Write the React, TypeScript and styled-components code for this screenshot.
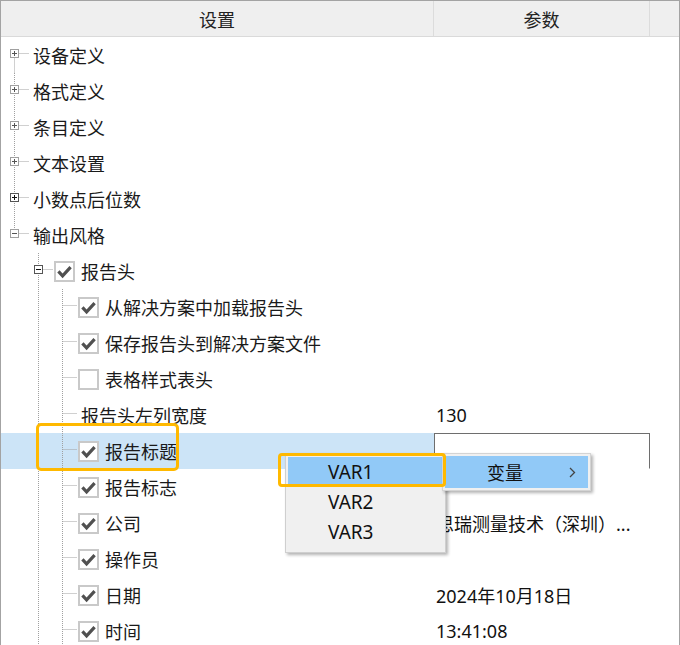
import React from 'react';
import styled, { createGlobalStyle } from 'styled-components';

const GlobalStyle = createGlobalStyle`
  html, body { margin: 0; padding: 0; background: #fff; }
  body { font-family: "Noto Sans", "Noto Sans CJK SC", sans-serif; }
`;

const Frame = styled.div`
  position: relative;
  width: 680px;
  height: 645px;
  box-sizing: border-box;
  border: 1px solid #a3a3a3;
  border-bottom: none;
  overflow: hidden;
  background: #fff;
  font-family: "Noto Sans", "Noto Sans CJK SC", sans-serif;
  font-size: 18px;
  color: #1a1a1a;
`;

const HeaderRow = styled.div`
  display: grid;
  grid-template-columns: 433px 216px 1fr;
  height: 36px;
  box-sizing: border-box;
  background: #efefef;
  border-bottom: 1px solid #dadada;
`;

const HeaderCell = styled.div<{ $divider?: boolean }>`
  display: flex;
  align-items: center;
  justify-content: center;
  border-right: ${(p) => (p.$divider ? '1px solid #dcdcdc' : 'none')};
  color: #222;
  font-size: 18px;
`;

const Row = styled.div`
  display: grid;
  grid-template-columns: 433px 216px 1fr;
  height: 36px;
`;

const TreeCell = styled.div<{ $selected?: boolean }>`
  display: flex;
  align-items: center;
  height: 36px;
  background: ${(p) => (p.$selected ? '#cce4f7' : 'transparent')};
  white-space: nowrap;
  overflow: hidden;
`;

const ValueCell = styled.div`
  display: flex;
  align-items: center;
  height: 36px;
  white-space: nowrap;
  overflow: hidden;
`;

const ValueText = styled.span`
  padding-left: 2px;
  color: #111;
`;

const InputBox = styled.div`
  box-sizing: border-box;
  width: 216px;
  height: 36px;
  border: 1px solid #6e6e6e;
  border-bottom-color: transparent;
  background: #fff;
`;

const GuideSvg = styled.svg`
  flex: none;
  display: block;
`;

const CheckBox = styled.span`
  flex: none;
  box-sizing: border-box;
  width: 21px;
  height: 21px;
  margin-left: 1px;
  margin-right: 6px;
  border: 2px solid #c9c9c9;
  background: #fff;
  display: flex;
  align-items: center;
  justify-content: center;
`;

const Label = styled.span<{ $plain?: boolean }>`
  margin-left: ${(p) => (p.$plain ? '4px' : '0')};
  color: #1a1a1a;
`;

const ContextMenu = styled.div`
  position: absolute;
  left: 284px;
  top: 452px;
  width: 161px;
  height: 100px;
  box-sizing: border-box;
  border: 1px solid #cfcfcf;
  background: #f0f0f0;
  padding: 3px 1px 5px 2px;
  box-shadow: 2px 2px 3px rgba(0, 0, 0, 0.3);
`;

const MenuItem = styled.div<{ $active?: boolean }>`
  height: 30px;
  display: flex;
  align-items: center;
  padding-left: 40px;
  background: ${(p) => (p.$active ? '#91c9f7' : 'transparent')};
  font-size: 19px;
  color: #111;
`;

const SubMenu = styled.div`
  position: absolute;
  left: 441px;
  top: 452px;
  width: 149px;
  height: 38px;
  box-sizing: border-box;
  border: 1px solid #d4d4d4;
  background: #f0f0f0;
  padding: 2px;
  box-shadow: 2px 2px 3px rgba(0, 0, 0, 0.3);
`;

const SubItem = styled.div`
  height: 32px;
  display: flex;
  align-items: center;
  justify-content: space-between;
  padding-left: 42px;
  padding-right: 12px;
  background: #91c9f7;
  font-size: 18px;
  color: #111;
`;

const Highlight = styled.div<{ $l: number; $t: number; $w: number; $h: number; $r: number }>`
  position: absolute;
  left: ${(p) => p.$l}px;
  top: ${(p) => p.$t}px;
  width: ${(p) => p.$w}px;
  height: ${(p) => p.$h}px;
  box-sizing: border-box;
  border: 3px solid #ffb900;
  border-radius: ${(p) => p.$r}px;
  pointer-events: none;
`;

type RowData = {
  depth: number;
  label: string;
  exp?: 'plus' | 'minus';
  check?: boolean;
  anc?: boolean[];
  above?: boolean;
  below?: boolean;
  dark?: boolean;
  value?: string;
  input?: boolean;
  selected?: boolean;
};

const rows: RowData[] = [
  { depth: 0, exp: 'plus', label: '设备定义', above: false, below: true },
  { depth: 0, exp: 'plus', label: '格式定义', above: true, below: true },
  { depth: 0, exp: 'plus', label: '条目定义', above: true, below: true },
  { depth: 0, exp: 'plus', label: '文本设置', above: true, below: true },
  { depth: 0, exp: 'plus', label: '小数点后位数', above: true, below: true, dark: true },
  { depth: 0, exp: 'minus', label: '输出风格', above: true, below: false },
  { depth: 1, exp: 'minus', check: true, label: '报告头', anc: [false], above: true, below: true, dark: true },
  { depth: 2, check: true, label: '从解决方案中加载报告头', anc: [false, true], above: true, below: true },
  { depth: 2, check: true, label: '保存报告头到解决方案文件', anc: [false, true], above: true, below: true },
  { depth: 2, check: false, label: '表格样式表头', anc: [false, true], above: true, below: true },
  { depth: 2, label: '报告头左列宽度', anc: [false, true], above: true, below: true, value: '130' },
  { depth: 2, check: true, label: '报告标题', anc: [false, true], above: true, below: true, input: true, selected: true },
  { depth: 2, check: true, label: '报告标志', anc: [false, true], above: true, below: true },
  { depth: 2, check: true, label: '公司', anc: [false, true], above: true, below: true, value: '思瑞测量技术（深圳）...' },
  { depth: 2, check: true, label: '操作员', anc: [false, true], above: true, below: true },
  { depth: 2, check: true, label: '日期', anc: [false, true], above: true, below: true, value: '2024年10月18日' },
  { depth: 2, check: true, label: '时间', anc: [false, true], above: true, below: true, value: '13:41:08' },
];

const DOT = '#a0a0a0';

function Guides({ r }: { r: RowData }) {
  const w = 24 * r.depth + 28;
  const cy = 16.5;
  const own = 13.5 + 24 * r.depth;
  const anc = r.anc || [];
  return (
    <GuideSvg width={w} height={36} viewBox={`0 0 ${w} 36`}>
      {anc.map((c, i) =>
        c ? (
          <line key={i} x1={13.5 + 24 * i} y1={0} x2={13.5 + 24 * i} y2={36} stroke={DOT} strokeDasharray="1 1" />
        ) : null
      )}
      {(r.above || r.below) && (
        <line x1={own} y1={r.above ? 0 : cy} x2={own} y2={r.below ? 36 : cy} stroke={DOT} strokeDasharray="1 1" />
      )}
      <line x1={own + 1} y1={cy} x2={w} y2={cy} stroke={DOT} strokeDasharray="1 1" />
      {r.exp && (
        <g>
          <rect x={own - 4} y={cy - 4} width={8} height={8} fill="#fff" stroke={r.dark ? '#555' : '#a0a0a0'} />
          <line x1={own - 2.5} y1={cy} x2={own + 2.5} y2={cy} stroke={r.dark ? '#111' : '#555'} />
          {r.exp === 'plus' && (
            <line x1={own} y1={cy - 2.5} x2={own} y2={cy + 2.5} stroke={r.dark ? '#111' : '#555'} />
          )}
        </g>
      )}
    </GuideSvg>
  );
}

function Check({ on }: { on: boolean }) {
  return (
    <CheckBox>
      {on && (
        <svg width={17} height={17} viewBox="0 0 17 17">
          <path d="M2.4 8.4 L6.6 12.8 L14.6 4.2" fill="none" stroke="#505050" strokeWidth={3.2} />
        </svg>
      )}
    </CheckBox>
  );
}

function Chevron() {
  return (
    <svg width={7} height={11} viewBox="0 0 7 11">
      <polyline points="1,1 5.5,5.5 1,10" fill="none" stroke="#444" strokeWidth={1.3} />
    </svg>
  );
}

export default function App() {
  return (
    <>
      <GlobalStyle />
      <Frame>
        <HeaderRow>
          <HeaderCell $divider>设置</HeaderCell>
          <HeaderCell $divider>参数</HeaderCell>
          <HeaderCell />
        </HeaderRow>
        {rows.map((r, i) => (
          <Row key={i}>
            <TreeCell $selected={r.selected}>
              <Guides r={r} />
              {r.check !== undefined && <Check on={r.check} />}
              <Label $plain={r.check === undefined}>{r.label}</Label>
            </TreeCell>
            <ValueCell>
              {r.input ? <InputBox /> : r.value ? <ValueText>{r.value}</ValueText> : null}
            </ValueCell>
            <div />
          </Row>
        ))}
        <ContextMenu>
          <MenuItem $active>VAR1</MenuItem>
          <MenuItem>VAR2</MenuItem>
          <MenuItem>VAR3</MenuItem>
        </ContextMenu>
        <SubMenu>
          <SubItem>
            <span>变量</span>
            <Chevron />
          </SubItem>
        </SubMenu>
        <Highlight $l={35} $t={422} $w={143} $h={48} $r={5} />
        <Highlight $l={277} $t={452} $w={168} $h={34} $r={4} />
      </Frame>
    </>
  );
}
